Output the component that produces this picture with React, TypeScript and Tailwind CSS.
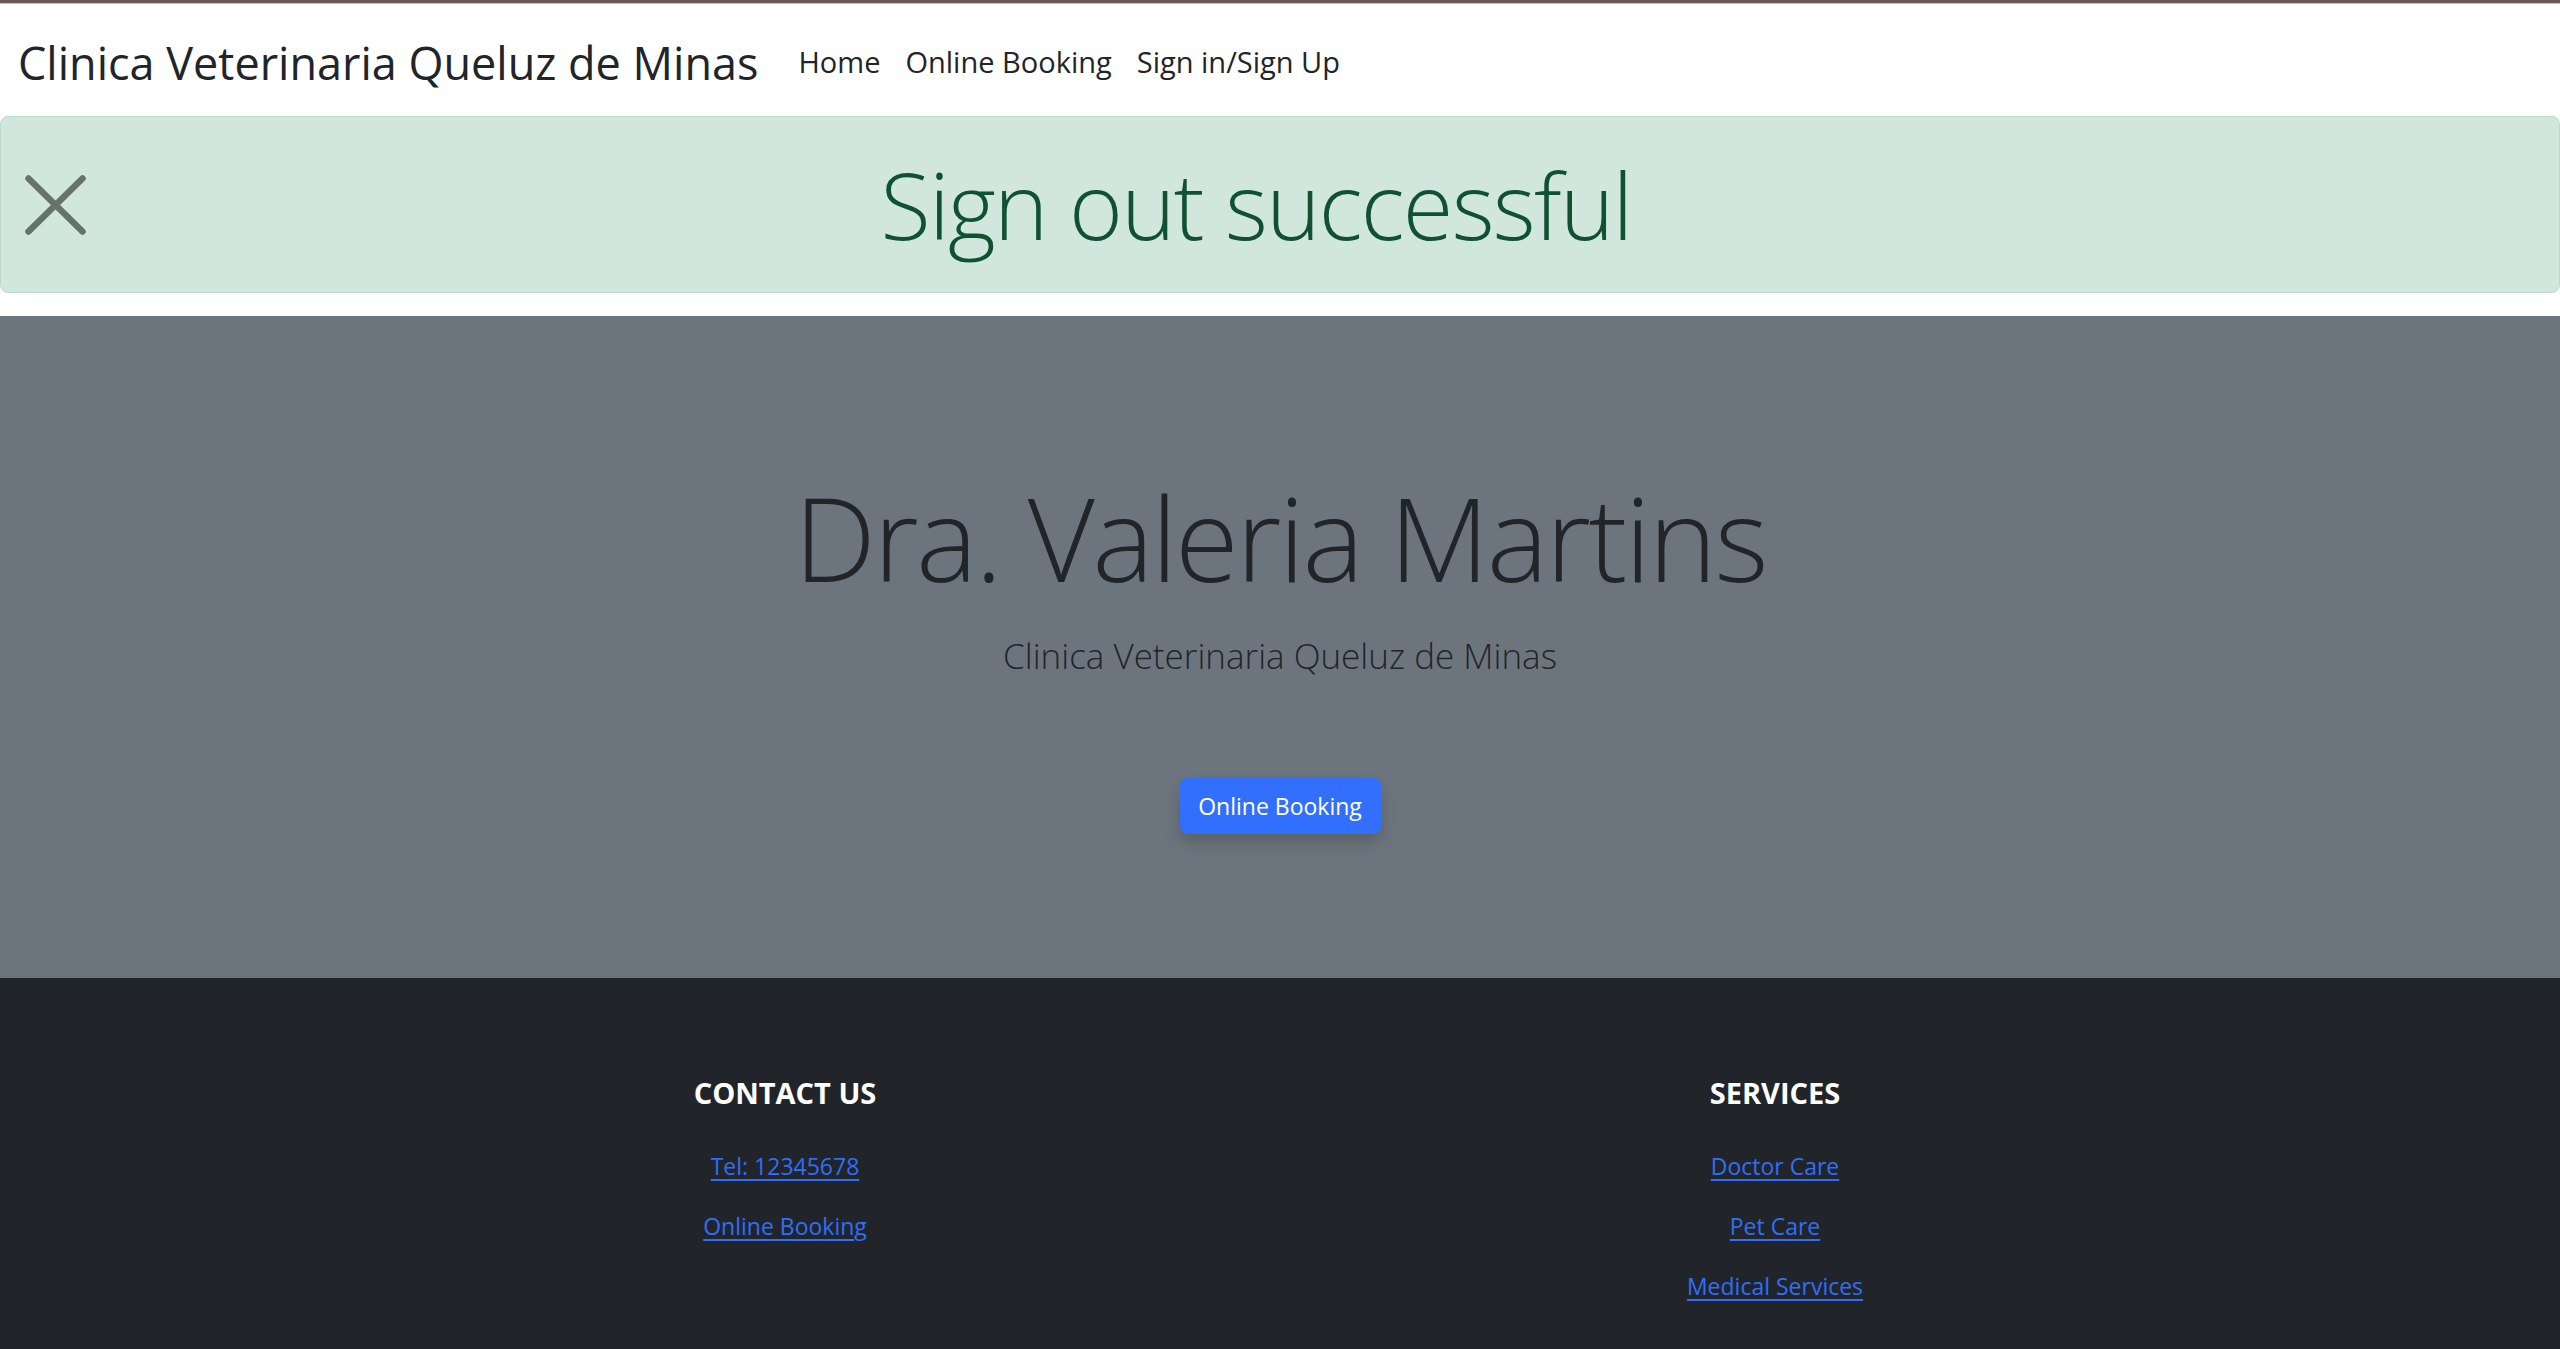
import React from 'react';

const navLinks = ['Home', 'Online Booking', 'Sign in/Sign Up'];
const contactLinks = ['Tel: 12345678', 'Online Booking'];
const serviceLinks = ['Doctor Care', 'Pet Care', 'Medical Services'];

function FooterColumn({ title, links }: { title: string; links: string[] }) {
  return (
    <div className="flex flex-col items-center">
      <h5 className="text-[29px] leading-[36px] font-bold text-white uppercase">{title}</h5>
      <ul className="mt-[36px] flex flex-col items-center gap-[22px]">
        {links.map((l) => (
          <li key={l}>
            <a href="#" className="text-[23px] leading-[38px] text-[#2f6ef8] underline underline-offset-[4px]">
              {l}
            </a>
          </li>
        ))}
      </ul>
    </div>
  );
}

export default function App() {
  return (
    <div className="min-h-screen bg-white font-['Open_Sans',sans-serif] text-[#212529]">
      {/* browser top edge */}
      <div className="h-[3px] bg-[#6b5756]" />
      <div className="h-px bg-[#f0b4ad]" />

      {/* Navbar */}
      <nav className="flex items-center h-[112px] px-[18px]">
        <a href="#" className="mt-[6px] mr-[40px] text-[45px] leading-[68px] text-[#212529]">
          Clinica Veterinaria Queluz de Minas
        </a>
        <ul className="mt-[3px] flex gap-[25px]">
          {navLinks.map((l) => (
            <li key={l}>
              <a href="#" className="text-[29px] leading-[44px] text-[#212529]">
                {l}
              </a>
            </li>
          ))}
        </ul>
      </nav>

      {/* Alert */}
      <div className="relative flex h-[177px] items-center justify-center rounded-[8px] border border-[#badbcc] bg-[#d1e7dd] pl-4 pr-16">
        <button
          className="absolute left-[24px] top-1/2 -translate-y-1/2 opacity-50"
          aria-label="Close"
        >
          <svg width="61" height="60" viewBox="0 0 61 60">
            <path d="M3.5 3.5 L57.5 56.5 M57.5 3.5 L3.5 56.5" stroke="#000" strokeWidth="6.5" strokeLinecap="round" />
          </svg>
        </button>
        <h1 className="text-[92px] leading-[113px] tracking-[-1.7px] font-light text-[#0f5132]">
          Sign out successful
        </h1>
      </div>

      <div className="h-[23px]" />

      {/* Hero */}
      <section className="flex h-[662px] flex-col items-center bg-[#6c757d] pt-[149px] text-center">
        <h1 className="text-[116px] leading-[145px] tracking-[-2.5px] font-light text-[#212529]">
          Dra. Valeria Martins
        </h1>
        <p className="mt-[20px] text-[35px] leading-[51px] font-light text-[#212529]">
          Clinica Veterinaria Queluz de Minas
        </p>
        <a
          href="#"
          className="mt-[97px] flex h-[56px] w-[201px] items-center justify-center rounded-[8px] bg-[#336ffd] text-[23px] text-white shadow-[0_8px_16px_rgba(0,0,0,0.18)]"
        >
          Online Booking
        </a>
      </section>

      {/* Footer */}
      <footer className="bg-[#212529] pt-[97px] pb-[60px]">
        <div className="mx-auto grid w-[1980px] grid-cols-2 text-center">
          <FooterColumn title="Contact Us" links={contactLinks} />
          <FooterColumn title="Services" links={serviceLinks} />
        </div>
      </footer>
    </div>
  );
}
